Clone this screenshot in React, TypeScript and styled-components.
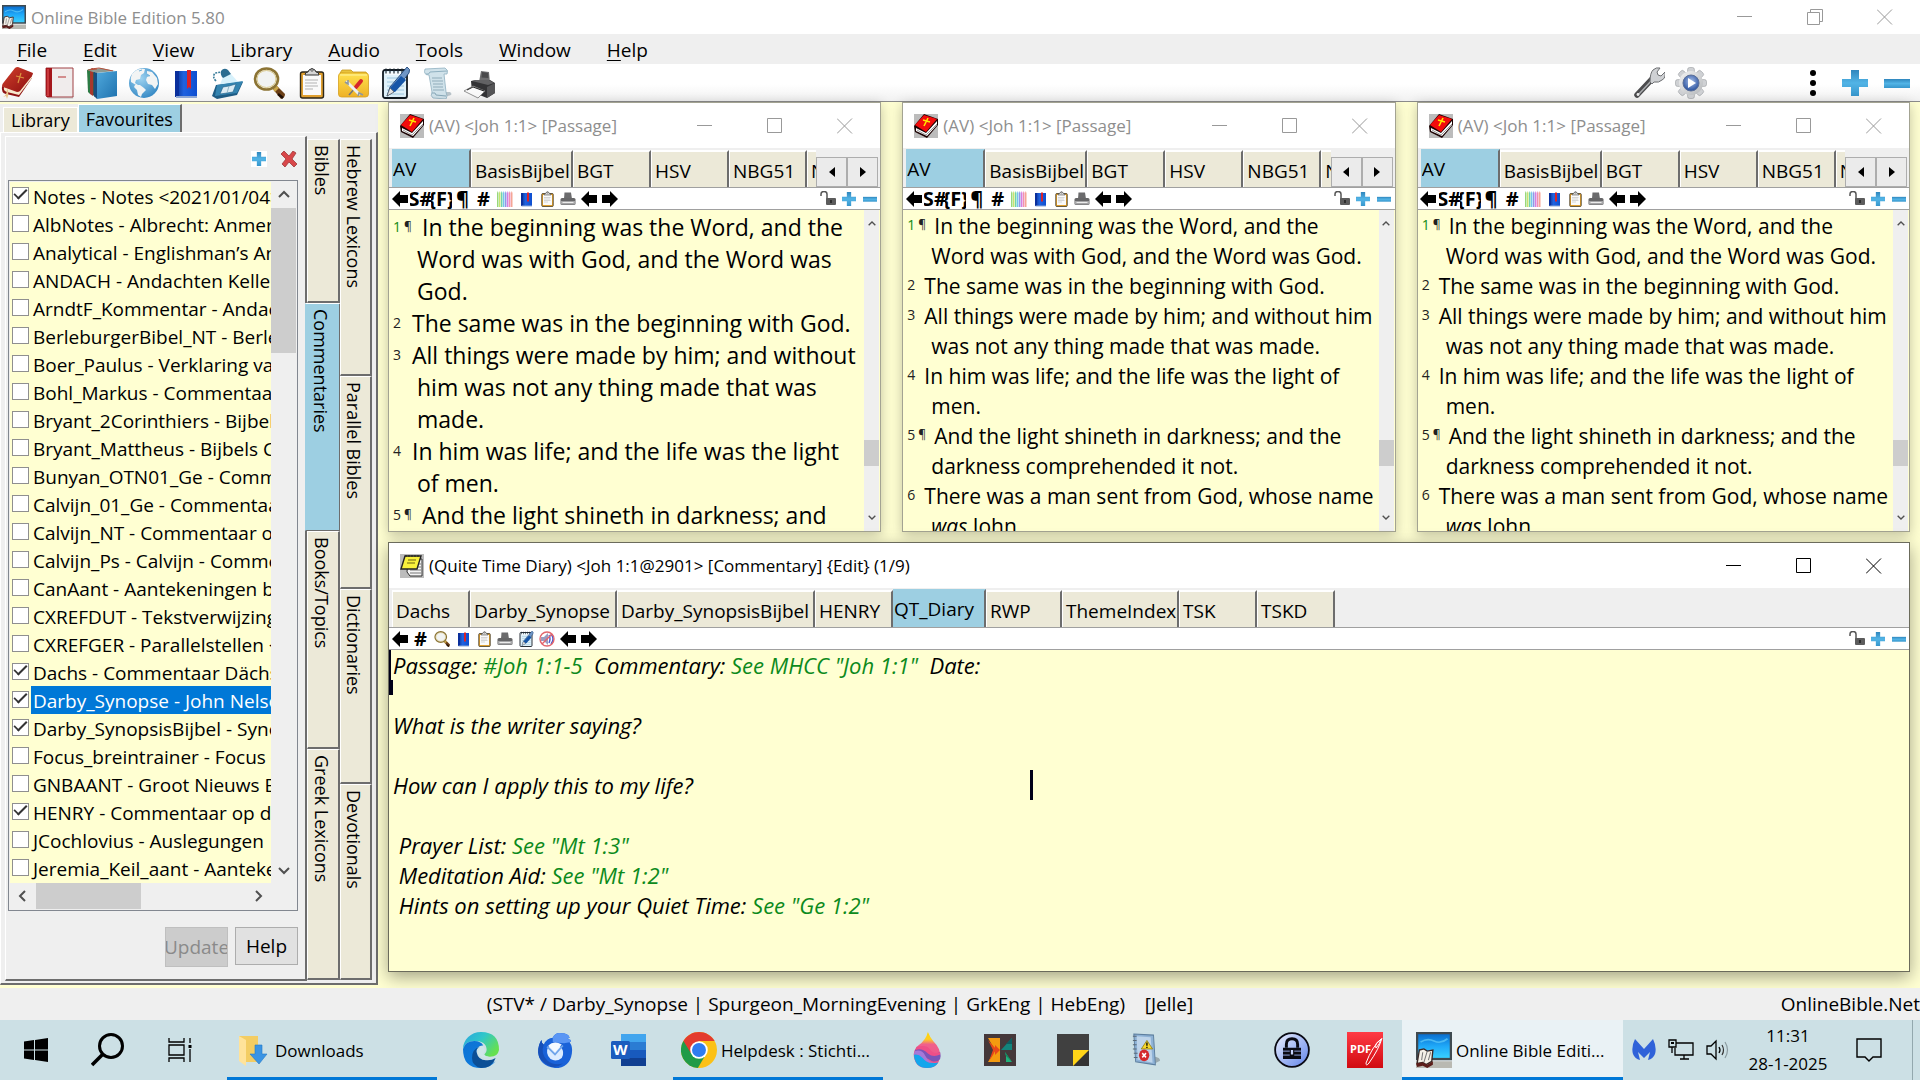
import React from "react";
import styled, { createGlobalStyle, css } from "styled-components";

const UI = `"Open Sans", "Noto Sans", sans-serif`;
const c = {
  paper: "#ffffd2",
  face: "#efefef",
  tab: "#ece9d8",
  active: "#9dcfe2",
  line: "#a0a0a0",
  dark: "#6d6d6d",
  accent: "#0078d7",
  bar: "#cce0e5",
};

const Global = createGlobalStyle`
  *, *::before, *::after { box-sizing: border-box; }
  html, body, #root { margin: 0; height: 100%; }
  body { font-family: ${UI}; font-size: 19px; color: #000; background: ${c.paper}; overflow: hidden; }
  button { font: inherit; color: inherit; background: none; border: 0; padding: 0; margin: 0; }
  svg { display: block; flex: none; }
`;

const Shell = styled.div`
  display: flex;
  flex-direction: column;
  height: 100vh;
`;

/* ---------- icons ---------- */

type I = { s?: number; h?: number };
const Svg = ({ s = 32, h, vb = "0 0 32 32", children }: I & { vb?: string; children: React.ReactNode }) => (
  <svg width={s} height={h ?? s} viewBox={vb} preserveAspectRatio="none" aria-hidden="true">
    {children}
  </svg>
);

const HiddenSvg = styled.svg`
  position: absolute;
`;
const Defs = () => (
  <HiddenSvg width="0" height="0" aria-hidden="true">
    <defs>
      <linearGradient id="red" x1="0" y1="0" x2="1" y2="1"><stop offset="0" stopColor="#d2402c" /><stop offset="1" stopColor="#8c0f10" /></linearGradient>
      <linearGradient id="blue" x1="0" y1="0" x2="1" y2="1"><stop offset="0" stopColor="#4fa8dc" /><stop offset="1" stopColor="#1f72ae" /></linearGradient>
      <linearGradient id="navy" x1="0" y1="0" x2="1" y2="0"><stop offset="0" stopColor="#0a2f8c" /><stop offset=".4" stopColor="#1f62e0" /><stop offset="1" stopColor="#0d4ed0" /></linearGradient>
      <linearGradient id="sky" x1="0" y1="0" x2="0" y2="1"><stop offset="0" stopColor="#0a6fd0" /><stop offset=".5" stopColor="#1fa8f8" /><stop offset="1" stopColor="#38d0ff" /></linearGradient>
      <radialGradient id="globe" cx=".4" cy=".35" r=".7"><stop offset="0" stopColor="#9cd2f0" /><stop offset="1" stopColor="#3488c4" /></radialGradient>
      <linearGradient id="yel" x1="0" y1="0" x2="0" y2="1"><stop offset="0" stopColor="#ffe24f" /><stop offset="1" stopColor="#eeb126" /></linearGradient>
      <linearGradient id="plus" x1="0" y1="0" x2="0" y2="1"><stop offset="0" stopColor="#2f86bd" /><stop offset=".5" stopColor="#52b4e6" /><stop offset="1" stopColor="#3796cc" /></linearGradient>
      <linearGradient id="metal" x1="0" y1="0" x2="1" y2="1"><stop offset="0" stopColor="#f4f4f4" /><stop offset="1" stopColor="#b4b7ba" /></linearGradient>
      <radialGradient id="gearb" cx=".5" cy=".4" r=".6"><stop offset="0" stopColor="#a9c0ea" /><stop offset="1" stopColor="#274f9c" /></radialGradient>
      <linearGradient id="edge1" x1="0" y1="0" x2="1" y2=".6"><stop offset="0" stopColor="#2aa5e0" /><stop offset=".5" stopColor="#30c7c9" /><stop offset="1" stopColor="#66e04f" /></linearGradient>
      <linearGradient id="edge2" x1="0" y1="0" x2="1" y2="1"><stop offset="0" stopColor="#0c72d4" /><stop offset="1" stopColor="#1280e0" /></linearGradient>
      <linearGradient id="drop" x1="0" y1="0" x2="0" y2="1"><stop offset="0" stopColor="#ffd400" /><stop offset=".2" stopColor="#ffcf20" /><stop offset=".34" stopColor="#f0608c" /><stop offset="1" stopColor="#e8508c" /></linearGradient>
      <linearGradient id="lock" x1="0" y1="0" x2="1" y2="1"><stop offset="0" stopColor="#eef2ff" /><stop offset="1" stopColor="#5f83ea" /></linearGradient>
      <linearGradient id="pdf" x1="0" y1="0" x2="0" y2="1"><stop offset="0" stopColor="#ff3a44" /><stop offset="1" stopColor="#d00a10" /></linearGradient>
    </defs>
  </HiddenSvg>
);

const AppIcon = ({ s, h }: I) => (
  <Svg s={s} h={h}>
    <path d="M0 26h32v6H0z" fill="#b9b9b2" />
    <path d="M0 0h32v25H0z" fill="#3f4a50" />
    <path d="M2 2h28v21H2z" fill="url(#sky)" />
    <path d="M4 9q6-4 12-1t12-2" stroke="#64cdfa" strokeWidth="1.5" fill="none" opacity=".7" />
    <path d="M3 16l4-1 3 2 5-1-1 10-5 3-3-2-5 1z" fill="#f4f1e8" stroke="#3a2826" strokeWidth="1.2" />
    <path d="M10 17l-3 10M6 18l-1 7M13 18l-2 7" stroke="#777" strokeWidth=".9" fill="none" />
    <path d="M0 28l6-1 4 2 5-3v3l-5 3-4-2-5 1z" fill="#5c1d1a" />
  </Svg>
);
const BibleRed = () => (
  <Svg>
    <path d="M1 19q-1 7 4 8l13 3 13-19V8L18 25z" fill="#8f1212" />
    <path d="M3 20q-1 4 3 5l12 3L31 11V9L18 24z" fill="#f7e8cc" />
    <path d="M1 19Q1 17 3 15L14 1q1-1 3-1l15 6q0 2-2 4L19 24q-1 1-3 1L5 21q-3-1-4-2z" fill="url(#red)" />
    <path d="M20 6l-3 10M15 9l8 2" stroke="#dc9440" strokeWidth="1.2" />
    <path d="M6 22q0 6-4 8l3-1 1 3q2-4 1-9z" fill="#e9c48c" />
  </Svg>
);
const BookWhite = () => (
  <Svg>
    <path d="M4 29h27l-1 3H5z" fill="#d8d8d8" />
    <path d="M3 1h27v29H4l-1-1z" fill="#f0ecec" stroke="#a04044" strokeWidth="1" />
    <path d="M3 1h6v29H4l-1-2z" fill="#a5161b" />
    <path d="M4 2h2v27H4z" fill="#c8393c" />
    <path d="M15 10h8" stroke="#c0504f" strokeWidth="1.2" />
  </Svg>
);
const Books = () => (
  <Svg>
    <path d="M2 3l3-1v25l-2-2z" fill="#2c7a44" />
    <path d="M5 2l3-1v28l-3-2z" fill="#a8382c" />
    <path d="M8 2l2-1v29l-2-2z" fill="#3c5450" />
    <path d="M2 3l14-2 14 3-19 2z" fill="#8c9a94" />
    <path d="M6 2l8-1 14 3M3 3l9-1" stroke="#b8523c" strokeWidth="1" fill="none" />
    <path d="M9 5l3 1v26l-3-3z" fill="#174f80" />
    <path d="M12 6l20-2v25l-20 3z" fill="url(#blue)" />
  </Svg>
);
const Globe = () => (
  <Svg>
    <circle cx="17" cy="16" r="15" fill="url(#globe)" />
    <path d="M5 7q5-6 13-5l-1 4-3 2-1 4-4 1-1 3 3 2-2 0-5-3Q3 11 5 7z" fill="#f2f4f4" />
    <path d="M8 18l5 0 4 3 2 2-4 4-1 3-3-2-1-5-3-3z" fill="#f2f4f4" />
    <path d="M20 4l5 1 5 6 1 6-3 5-3-4-4-1-2-4 1-3 3-1-3-2z" fill="#f2f4f4" />
    <path d="M12 4l3-1M20 7l3 2" stroke="#6ab0dc" />
  </Svg>
);
const BookBlue = ({ s, h }: I) => (
  <Svg s={s} h={h}>
    <path d="M6 4h22v26H6z" fill="url(#navy)" />
    <path d="M6 4h4v26H6z" fill="#0a2f9c" />
    <path d="M7 29h21v2H7z" fill="#8fa8d4" />
    <path d="M18 3h4v19l-2-2-2 2z" fill="#d8222a" />
  </Svg>
);
const Lamp = () => (
  <Svg>
    <path d="M12 10l8-3 8 9-20 4z" fill="#cdeefa" opacity=".8" />
    <path d="M5 18l27-3-6 13-20 4-5-3z" fill="#1f5c84" />
    <path d="M6 18l26-4-6 12-22 3z" fill="#3484b0" />
    <path d="M12 20l6-1 7-2-3 8-6 1-7 1z" fill="#dcecf4" stroke="#1f5c84" strokeWidth=".6" />
    <path d="M18 19l-2 7" stroke="#7fa8bc" strokeWidth=".8" />
    <path d="M5 14Q1 10 4 6l7-1" stroke="#3d7f9c" strokeWidth="1.600" fill="none" strokeDasharray="2 1" />
    <path d="M10 4q3-4 7-1l3 4-8 4q-3-3-2-7z" fill="#2a6c90" />
  </Svg>
);
const Magnifier = ({ s, h }: I) => (
  <Svg s={s} h={h}>
    <path d="M19 21l4-3 9 9q0 4-4 5z" fill="#6b3f16" />
    <path d="M19 21l4-3 3 3-4 4z" fill="#caa64a" />
    <path d="M25 27l5 4" stroke="#1f0e05" strokeWidth="2.500" />
    <ellipse cx="13.500" cy="12" rx="11.500" ry="10.500" fill="#f1f3f2" stroke="#8c7434" strokeWidth="2.600" />
    <ellipse cx="13.500" cy="12" rx="9.500" ry="8.500" fill="none" stroke="#d9c98c" strokeWidth="1" />
  </Svg>
);
const Clipboard = ({ s, h }: I) => (
  <Svg s={s} h={h}>
    <rect x="5.500" y="5" width="23" height="26" rx="2" fill="#e0a030" stroke="#2c2618" strokeWidth="1.400" />
    <rect x="8" y="8" width="18" height="20" fill="#fafafa" />
    <path d="M10 8q0-3 3-3l1-2q3-3 6 0l1 2q3 0 3 3z" fill="#d6d6d6" stroke="#333" strokeWidth="1" />
    <circle cx="17" cy="3" r="1.200" fill="#fff" stroke="#333" strokeWidth=".8" />
    <path d="M10 13h13M10 16h12M10 19h13M10 22h8" stroke="#b2b2b2" strokeWidth="1" />
  </Svg>
);
const ToolFolder = () => (
  <Svg>
    <path d="M3 6l2-3h9l2 2h13l2 3z" fill="#e8c43c" stroke="#c8981c" strokeWidth=".8" />
    <rect x="1.500" y="6" width="30" height="24" rx="3" fill="url(#yel)" stroke="#d6a020" strokeWidth=".8" />
    <path d="M3 8h27" stroke="#fff2a0" />
    <path d="M24 14l-5 6" stroke="#d6262a" strokeWidth="4" strokeLinecap="round" />
    <path d="M18 21l-6 7" stroke="#777" strokeWidth="1.600" />
    <path d="M10 15l12 12" stroke="#eceff1" strokeWidth="3" strokeLinecap="round" />
    <path d="M8 15l3 2 0-4M21 29l1-3 4 2" stroke="#8f979b" strokeWidth="1.600" fill="none" />
  </Svg>
);
const NotePen = ({ s, h }: I) => (
  <Svg s={s} h={h}>
    <rect x="4" y="3" width="24" height="28" rx="2" fill="#dff1fa" stroke="#121a22" strokeWidth="1.800" />
    <path d="M8 11h17M8 15h17M8 19h17M8 23h17M8 27h17" stroke="#9cc6de" strokeWidth="1" />
    <path d="M6 5h21v3H6z" fill="#f4fafd" />
    <path d="M7 1.500v5M11 1.500v5M15 1.500v5M19 1.500v5M23 1.500v5" stroke="#1c2832" strokeWidth="1.200" />
    <path d="M28 0q4 2 2 6L16 24l-8 5 3-9z" fill="#6f96c6" stroke="#123a70" strokeWidth=".8" />
    <path d="M22 9l5 4-11 12-5-4z" fill="#1656a8" />
    <path d="M11 21l4 4-7 4z" fill="#e6e6e6" stroke="#444" strokeWidth=".5" />
  </Svg>
);
const Scroll = () => (
  <Svg>
    <path d="M16 25h13q4 3-3 4z" fill="#b9c4ca" />
    <path d="M4 2l20-1q4 2 2 6h-3l2 18 1 4-1 3-13-1q-3-2-1-6L8 8Q2 8 4 2z" fill="#d0e2ea" stroke="#8fb0c0" strokeWidth=".8" />
    <path d="M5 7q3 1 4-2l17-1" stroke="#8fb0c0" fill="none" />
    <path d="M11 11h10M11 14h11M12 17h10M12 20h10M12 23h11" stroke="#8fabb9" strokeWidth="1.200" />
    <path d="M11 26q4-1 4 2l10 1" stroke="#88a8b8" fill="none" />
  </Svg>
);
const PrinterBig = () => (
  <Svg>
    <path d="M18 4l8 1 1 11-11-1z" fill="#6e6e70" />
    <path d="M19 5l6 1 .5 5-7-.5z" fill="#4a4a4c" />
    <path d="M8 14l5-1h14l5 3v10l-8 5-15-6z" fill="#333335" />
    <path d="M9 14l16 4 6-2-5-3H13z" fill="#626264" />
    <path d="M24 20l8-4v10l-8 5z" fill="#555557" />
    <path d="M1 24l9-5 12 5-7 7z" fill="#fafafa" stroke="#777" strokeWidth=".8" />
    <path d="M4 23l6-3M10 20l11 4" stroke="#222" />
  </Svg>
);
const PrinterSmall = ({ s, h }: I) => (
  <Svg s={s} h={h}>
    <path d="M9 3h13l2 13H8z" fill="#6b6b6d" />
    <rect x="1" y="14" width="30" height="14" rx="3" fill="#666668" />
    <path d="M2 20h28v7H2z" fill="#a5a5a7" />
    <path d="M5 22h22v2H5z" fill="#ececec" />
  </Svg>
);
const Wrench = () => (
  <Svg>
    <path d="M4 28L19 12" stroke="#4c4c4e" strokeWidth="5.500" strokeLinecap="round" />
    <path d="M5 28L20 12" stroke="#a9abae" strokeWidth="1.600" strokeLinecap="round" />
    <path d="M17 15q0-9 3-12 3-3 7-2l-3 4 1 3 3 1 4-4q1 6-3 8-3 3-8 2l-2 2z" fill="#cfd1d4" stroke="#6e7073" strokeWidth="1" />
    <circle cx="5" cy="27.500" r="1.400" fill="#eee" />
  </Svg>
);
const Gear = () => (
  <Svg>
    <g fill="#cfd1d4" stroke="#9a9da1" strokeWidth=".6">
      {[0, 45, 90, 135].map((a) => (
        <rect key={a} x="12.600" y=".5" width="6.800" height="31" rx="2" transform={`rotate(${a} 16 16)`} />
      ))}
    </g>
    <circle cx="16" cy="16" r="12" fill="url(#metal)" />
    <circle cx="16" cy="16" r="8" fill="url(#gearb)" stroke="#5b6f98" />
    <path d="M13 11l8 5-8 5z" fill="#fff" />
  </Svg>
);
const Plus = ({ s = 26 }: I) => (
  <Svg s={s} vb="0 0 26 26"><path d="M9 0h8v9h9v8h-9v9H9v-9H0V9h9z" fill="url(#plus)" /></Svg>
);
const Minus = ({ s = 26 }: I) => (
  <Svg s={s} vb="0 0 26 26"><path d="M0 9h26v9H0z" fill="url(#plus)" /></Svg>
);
const Dots = () => (
  <Svg><circle cx="16" cy="6" r="3" /><circle cx="16" cy="16" r="3" /><circle cx="16" cy="26" r="3" /></Svg>
);
const RedX = () => (
  <Svg s={16} vb="0 0 16 16">
    <path d="M3 0l5 5 4-5 3 2-4 6 5 5-3 3-5-5-4 5-3-3 4-5-5-5z" fill="#d8474a" stroke="#9c3a3a" strokeWidth=".8" />
  </Svg>
);
const WinBible = () => (
  <Svg s={24} vb="0 0 24 24">
    <path d="M0 0h24v24H0z" fill="#bcbcbc" />
    <path d="M0 12L10 0l14 5v6L13 24 1 18z" fill="#1c0303" />
    <path d="M2 14l10 5L23 7v4L13 22 2 17z" fill="#fff" />
    <path d="M3 16l9 5L23 10" stroke="#9a9a9a" fill="none" />
    <path d="M1 11L10 1l13 4-11 13z" fill="#f20c0c" />
    <path d="M14 4l-4 8M9 6l7 2" stroke="#ffe600" strokeWidth="1.600" />
  </Svg>
);
const WinNote = () => (
  <Svg s={24} vb="0 0 24 24">
    <path d="M0 0h24v24H0z" fill="#bcbcbc" />
    <path d="M8 5h14v17H10l-3-4z" fill="#f4f4f4" stroke="#333" />
    <path d="M10 19h11M19 10h2M18 13h3M10 16h11" stroke="#777" />
    <path d="M5 2h16l-4 13H1z" fill="#f8f03c" stroke="#222" strokeWidth="1.400" />
    <path d="M8 6h8M7 9h8" stroke="#6b6010" />
    <path d="M6 1v2M9 1v2M12 1v2M15 1v2M18 1v2" stroke="#222" />
  </Svg>
);
const Arrow = ({ flip }: { flip?: boolean }) => (
  <Svg s={16} vb="0 0 16 16">
    <path d={flip ? "M16 8L8 0v4H0v8h8v4z" : "M0 8l8-8v4h8v8H8v4z"} />
  </Svg>
);
const Pencils = () => (
  <Svg s={16} vb="0 0 16 16">
    {["#7fcf5a", "#b8dc4e", "#4cc79c", "#58b4ea", "#7c7be0", "#d060d8", "#ee769c", "#f2907c"].map((k, i) => (
      <path key={k} d={`M${i * 2 + 0.2} 2l.6-2 .6 2v14h-1.200z`} fill={k} />
    ))}
  </Svg>
);
const Unlock = () => (
  <Svg s={16} vb="0 0 16 16">
    <path d="M1 5V3q0-2.500 3-2.500t3 2.500v5" fill="none" stroke="#555" strokeWidth="1.500" />
    <rect x="6" y="7" width="10" height="7" rx="1" fill="#5c5c5c" />
    <path d="M11 9v3" stroke="#222" strokeWidth="1.600" />
  </Svg>
);
const NoSound = () => (
  <Svg s={16} vb="0 0 16 16">
    <path d="M2 6h3l4-4v12l-4-4H2z" fill="#9a9cc0" />
    <path d="M10 4q2 4 0 8M12 3q4 5 0 10" stroke="#4658d0" strokeWidth="1.400" fill="none" />
    <circle cx="8" cy="8" r="7" fill="none" stroke="#e2656c" strokeWidth="1.400" />
    <path d="M3 13L13 3" stroke="#e2656c" strokeWidth="1.400" />
  </Svg>
);

/* taskbar icons */
const Start = () => (
  <Svg s={24} vb="0 0 24 24"><path d="M0 3.500l10-1.400v9.400H0zM11 2l13-2v11.500H11zM0 12.500h10v9.400L0 20.500zM11 12.500h13V24l-13-2z" /></Svg>
);
const Search = () => (
  <Svg s={34} vb="0 0 34 34"><circle cx="20" cy="13" r="11.500" fill="none" stroke="#000" strokeWidth="3" /><path d="M12 21L1 32" stroke="#000" strokeWidth="3.500" /></Svg>
);
const TaskView = () => (
  <Svg s={24} vb="0 0 24 24">
    <path d="M1 0v4h15V0M1 24v-4h15v4M1 7h15v10H1zM22 0v5M22 11v13" fill="none" stroke="#000" strokeWidth="1.300" />
    <path d="M20.500 7h3v3h-3z" />
  </Svg>
);
const Folder = () => (
  <Svg s={36} h={32} vb="-3 0 36 32">
    <path d="M1 2h19v26H5z" fill="#f3cd63" />
    <path d="M1 2l7 4v26l-7-5z" fill="#ffe39a" />
    <path d="M17 11h7v9h5l-8 10-9-10h5z" fill="#3a94e4" stroke="#2478c6" strokeWidth=".6" />
  </Svg>
);
const Edge = () => (
  <Svg s={36}>
    <path d="M16 0C7 0 0 7 0 15q2-7 10-7 11 0 11 8 0 2-2 4 1 2 5 2 7 0 8-6Q32 0 16 0z" fill="url(#edge1)" />
    <path d="M0 15q2-7 10-7 6 0 8 4-7 0-6 8 1 7 9 9 4 0 8-3-5 6-13 6Q0 32 0 15z" fill="url(#edge2)" />
    <path d="M12 18q2 8 10 7 4 0 7-2-3 9-13 9-8-2-8-9 0-8 7-10-4 2-3 5z" fill="#0b4f96" />
    <path d="M17 12q-5 3-3 8 3 4 9 2-5-1-5-3 3-3-1-7z" fill="#cfe6ea" />
  </Svg>
);
const Bird = () => (
  <Svg s={36}>
    <path d="M16 32Q2 30 1 18q0-7 3-11 0 3 2 4 3-6 8-6 2-5 8-4 6 0 7 4l-2 1 3 1q1 1-1 2 3 4 2 10-2 13-15 13z" fill="#1a62d8" />
    <path d="M14 5q2-5 8-4 6 0 7 4l-2 1 3 1q1 1-1 2l-5 1-10-1z" fill="#5a96f4" />
    <path d="M4 7q0 3 2 4-3 8 3 14 5 5 14 3-5 4-10 3Q1 26 1 18q0-7 3-11z" fill="#1750b8" />
    <path d="M10 13q6-4 11 0 4 5 1 10-5 4-10 1-5-5-2-11z" fill="#dcecff" />
    <path d="M9 13l7 7 7-8" fill="none" stroke="#6fa4ea" strokeWidth="1.600" />
    <path d="M10 12q5-5 12-1l-6 7z" fill="#f6faff" />
  </Svg>
);
const IconText = styled.text`
  font: bold 15px ${UI};
  fill: #fff;
`;
const Word = () => (
  <Svg s={36} vb="0 0 36 36">
    <path d="M10 2h25v8H10z" fill="#41a5ee" /><path d="M10 10h25v8H10z" fill="#2b7cd3" />
    <path d="M10 18h25v8H10z" fill="#185abd" /><path d="M10 26h25v8H10z" fill="#103f91" />
    <rect x="0" y="9" width="19" height="18" rx="1.500" fill="#1b5cbe" />
    <IconText x="2" y="23">W</IconText>
  </Svg>
);
const Chrome = () => (
  <Svg s={36}>
    <circle cx="16" cy="16" r="16" fill="#fbc116" />
    <path d="M16 16L2.100 8A16 16 0 0 0 15 32l7-12z" fill="#209b48" />
    <path d="M16 8h13.900a16 16 0 0 0-27.700 0L9 19z" fill="#e33b2e" />
    <circle cx="16" cy="16" r="7.800" fill="#fff" /><circle cx="16" cy="16" r="6.200" fill="#2f7cf0" />
  </Svg>
);
const Drop = () => (
  <Svg s={28} h={36}>
    <path d="M17 0q2 4 6 8 9 7 8 14-2 10-15 10T1 22q-1-6 5-10 9-5 11-12z" fill="url(#drop)" />
    <path d="M4 14q11-1 14 3t13 1q1 3 0 6-3 3-9 2-9-4-20-9z" fill="#7a55b8" />
    <path d="M4 13q12-2 15 2 4 5 12 3v2q-8 3-14-1-7-5-14-3z" fill="#ee4f88" />
    <path d="M1 20q8-1 12 4t16 3q-4 5-13 5-14 0-15-12z" fill="#12a6ec" />
    <path d="M2 17q8-2 12 4t10 6q-8 1-13-4-5-4-10-3z" fill="#a678d8" />
  </Svg>
);
const KIcon = () => (
  <Svg s={32}>
    <path d="M0 0h32v32H0z" fill="#44383a" />
    <path d="M4 4h12v24H4l7-12z" fill="#f49a10" /><path d="M4 6l8 9-3 6-4 6 4-11z" fill="#e8461a" /><path d="M11 11l5 5-5 5z" fill="#e8461a" />
    <path d="M28 4L17 16h11z" fill="#12847c" /><path d="M22 10h6V4z" fill="#0b5e62" /><path d="M21 18l7 10h-6v-6z" fill="#22b07a" /><path d="M22 22l-1-4 7 10z" fill="#128a60" />
  </Svg>
);
const Sticky = () => (
  <Svg s={32}><path d="M0 0h32v32H0z" fill="#404040" /><path d="M32 16v16H16z" fill="#333" /><path d="M16 16h16L16 32z" fill="#ffd518" /></Svg>
);
const Notebook = () => (
  <Svg s={30} h={34}>
    <path d="M22 30l9-4q0-3-6-4z" fill="#9aa9ae" />
    <path d="M3 1l21 1 2 28-21-3z" fill="#8eb2d6" stroke="#5d7f9f" />
    <path d="M6 3l15 1 2 24-16-3z" fill="#bdd4ea" />
    <path d="M2 3h4M2 7h4M2 11h4M2 15h4M3 19h4M3 23h4" stroke="#5a6a78" />
    <path d="M17 7l6 8H11z" fill="#f8d92a" stroke="#8c7710" strokeWidth=".8" /><path d="M17 9v3M17 13v1" stroke="#000" strokeWidth="1.400" />
    <circle cx="14" cy="21" r="5.500" fill="#d42a2e" /><path d="M12 19l4 4M16 19l-4 4" stroke="#fff" strokeWidth="1.600" />
  </Svg>
);
const Lock = () => (
  <Svg s={36}>
    <circle cx="16" cy="16" r="15" fill="url(#lock)" stroke="#0a0a14" strokeWidth="1.600" />
    <path d="M11 14v-3q0-5 5-5t5 5v3" fill="none" stroke="#0a0a14" strokeWidth="2.600" />
    <path d="M8 14h16v10H8z" fill="#0a0a14" />
    <path d="M8 17h6M18 17h6M8 20.500h6M18 20.500h6" stroke="#9fb4f4" strokeWidth=".8" />
    <path d="M16 16v4" stroke="#c8d4ff" strokeWidth="2" />
  </Svg>
);
const PdfText = styled.text`
  font: bold 11px ${UI};
  fill: #fff;
`;
const Pdf = () => (
  <Svg s={36} vb="0 0 36 36">
    <path d="M0 0h36v36H0z" fill="url(#pdf)" />
    <path d="M35 7q-8 4-6 9 4-4 5-9-9 8-15 24 0 4 3 0Q32 17 35 6" fill="none" stroke="#fff" strokeWidth="1" />
    <PdfText x="3" y="21">PDF</PdfText>
  </Svg>
);
const Malware = () => (
  <Svg s={24} vb="0 0 24 24"><path d="M3 1l9 10 9-10q4 8 2 15-2 5-7 6l2-8-6 6-6-6 2 8q-5-1-7-6Q-1 9 3 1z" fill="#2f62d9" /></Svg>
);
const Net = () => (
  <Svg s={26} h={22} vb="0 0 26 22"><path d="M8 4h17v12H7V9M12 20h9M16 16v4M1 1h7v7H1zM4 8v6" fill="none" stroke="#000" strokeWidth="1.300" /><path d="M3 3h3v2H3z" /></Svg>
);
const Speaker = () => (
  <Svg s={24} vb="0 0 24 24">
    <path d="M1 8h4l5-5v18l-5-5H1zM13 9q2 3 0 6" fill="none" stroke="#000" strokeWidth="1.300" />
    <path d="M16 7q3 5 0 10" fill="none" stroke="#333" strokeWidth="1.200" />
    <path d="M19 4q5 8 0 16" fill="none" stroke="#8b9ba0" strokeWidth="1.200" />
  </Svg>
);
const Notify = () => (
  <Svg s={26} vb="0 0 26 26"><path d="M1 2h24v18h-8l-4 4-4-4H1z" fill="none" stroke="#000" strokeWidth="1.400" /></Svg>
);

/* ---------- window chrome ---------- */

const ControlBtn = styled.button`
  width: 70px;
  height: 100%;
  display: grid;
  place-items: center;
`;
const Controls = ({ color, restore }: { color: string; restore?: boolean }) => (
  <>
    <ControlBtn aria-label="Minimise"><Svg s={16} vb="0 0 16 16"><path d="M0 7.500h15" stroke={color} /></Svg></ControlBtn>
    <ControlBtn aria-label="Maximise">
      <Svg s={16} vb="0 0 16 16">
        <path d={restore ? "M.5 3.500h12v12H.5zM3.500 3V.5h12v12H13" : "M.5.5h14v14H.5z"} fill="none" stroke={color} />
      </Svg>
    </ControlBtn>
    <ControlBtn aria-label="Close"><Svg s={16} vb="0 0 16 16"><path d="M0 .5l15 15M15 .5l-15 15" stroke={color} /></Svg></ControlBtn>
  </>
);

const TitleBar = styled.header`
  display: flex;
  align-items: center;
  height: 34px;
  flex: none;
  padding-left: 2px;
  background: #fff;
`;
const TitleText = styled.span<{ $color?: string }>`
  flex: 1;
  margin-left: 5px;
  font-size: 17px;
  color: ${(p) => p.$color ?? "#8e8e8e"};
`;

const MenuBar = styled.nav`
  display: flex;
  align-items: center;
  flex: none;
  height: 30px;
  gap: 36px;
  padding: 2px 17px 0;
  background: ${c.face};
`;
const MenuItem = styled.button`
  &::first-letter { text-decoration: underline; text-underline-offset: 3px; }
`;

const ToolBar = styled.div`
  display: flex;
  align-items: center;
  flex: none;
  height: 38px;
  padding: 0 2px 0 1px;
  background: linear-gradient(#fff 55%, #f1f1f1);
  border-bottom: 1px solid #8c8c8c;
`;
const ToolBtn = styled.button<{ $mid?: boolean }>`
  width: 42px;
  display: grid;
  justify-content: ${(p) => (p.$mid ? "center" : "start")};
`;
const Spacer = styled.span`
  flex: 1;
`;
const Gap = styled.span`
  width: 80px;
`;

/* ---------- sidebar ---------- */

const Workspace = styled.main`
  flex: 1;
  min-height: 0;
  display: flex;
  background: ${c.paper};
`;
const Side = styled.aside`
  width: 378px;
  flex: none;
  display: flex;
  flex-direction: column;
  margin: 2px 0 3px;
  background: ${c.face};
`;
const SideTabs = styled.div`
  display: flex;
  align-items: flex-end;
  height: 28px;
  padding-left: 3px;
  font-size: 18px;
`;
const SideTab = styled.button<{ $on?: boolean }>`
  height: ${(p) => (p.$on ? 28 : 25)}px;
  padding: 0 7px;
  background: ${(p) => (p.$on ? c.active : c.tab)};
  border: solid #fff;
  border-width: 1px 1px 0;
  ${(p) => p.$on && css`border-right: 2px solid ${c.dark};`}
`;
const SideFrame = styled.div`
  flex: 1;
  min-height: 0;
  display: flex;
  padding: 3px 4px 2px 4px;
  border: 1px solid #fff;
  border-right: 2px solid ${c.dark};
  border-bottom: 2px solid ${c.dark};
`;
const SidePanel = styled.section`
  width: 302px;
  display: flex;
  flex-direction: column;
  padding: 0 7px 14px 2px;
  border: 1px solid #fff;
  border-right: 2px solid ${c.dark};
  border-bottom: 2px solid ${c.dark};
`;
const SideTools = styled.div`
  display: flex;
  justify-content: flex-end;
  align-items: center;
  gap: 14px;
  height: 43px;
  padding-right: 1px;
`;
const PlusTile = styled.button`
  width: 16px;
  height: 16px;
  display: grid;
  place-items: center;
  background: #fff;
`;
const ListBox = styled.div`
  flex: 1;
  min-height: 0;
  display: grid;
  grid-template: minmax(0, 1fr) 26px / minmax(0, 1fr) 25px;
  border: 1px solid #828790;
  padding: 1px;
  background: ${c.face};
`;
const Rows = styled.div`
  overflow: hidden;
  background: ${c.paper};
`;
const Row = styled.label<{ $on?: boolean }>`
  display: flex;
  align-items: center;
  height: 28px;
  padding-left: 2px;
  white-space: nowrap;
  span {
    flex: 1;
    height: 28px;
    margin-left: 2px;
    padding-left: 2px;
    line-height: 30px;
    background: ${(p) => (p.$on ? c.accent : "none")};
    color: ${(p) => (p.$on ? "#fff" : "#000")};
  }
`;
const Check = styled.input`
  appearance: none;
  flex: none;
  width: 17px;
  height: 17px;
  margin: 0 0 2px;
  border: 1px solid #8f8f8f;
  background: #fff;
  &:checked::after {
    content: "";
    display: block;
    width: 15px;
    height: 7px;
    margin-top: 1px;
    border: solid #333;
    border-width: 0 0 2px 2px;
    transform: rotate(-45deg) scaleX(0.85);
  }
`;
const VBar = styled.div<{ $before: number; $thumb: number; $after: number }>`
  display: grid;
  grid-template-rows: ${(p) => `${p.$before}fr ${p.$thumb}fr ${p.$after}fr`};
  background: ${c.face};
  svg { justify-self: center; }
  svg:last-child { align-self: end; }
`;
const HBar = styled.div`
  display: grid;
  grid-template-columns: 26px 105px 1fr 26px;
  align-items: center;
  justify-items: center;
  background: ${c.face};
  > :nth-child(2) { align-self: stretch; justify-self: stretch; }
  svg:last-child { grid-column: 4; }
`;
const Thumb = styled.div`
  background: #cdcdcd;
`;
const Chev = ({ d, s = 12, pad = 7 }: { d: "u" | "d" | "l" | "r"; s?: number; pad?: number }) => {
  const path = { u: "M1 8l5-5 5 5", d: "M1 4l5 5 5-5", l: "M8 1L3 6l5 5", r: "M4 1l5 5-5 5" }[d];
  const vertical = d === "u" || d === "d";
  return (
    <Svg s={s} h={vertical ? s + pad * 2 : s} vb={vertical ? `0 ${(-pad * 12) / s} 12 ${12 + (pad * 24) / s}` : "0 0 12 12"}>
      <path d={path} fill="none" stroke="#505050" strokeWidth="2" />
    </Svg>
  );
};
const SideButtons = styled.div`
  display: flex;
  justify-content: flex-end;
  gap: 7px;
  margin-top: 16px;
`;
const PushBtn = styled.button`
  width: 63px;
  height: 38px;
  overflow: hidden;
  border: 1px solid #adadad;
  background: #e1e1e1;
  &:disabled {
    display: flex;
    justify-content: center;
    align-items: center;
    height: 40px;
    margin-bottom: -2px;
    border-color: #bfbfbf;
    background: #ccc;
    color: #8a8a8a;
  }
`;
const VTabs = styled.div`
  flex: 1;
  display: flex;
  flex-direction: column;
  padding: 3px 0 1px;
`;
const VTab = styled.button<{ $size: number; $on?: boolean }>`
  flex: ${(p) => p.$size - 9} 1 0;
  min-height: 0;
  writing-mode: vertical-rl;
  text-align: left;
  padding: 5px 2px 0 0;
  font-size: 18px;
  line-height: 24px;
  background: ${(p) => (p.$on ? c.active : c.tab)};
  border: 1px solid #fff;
  border-right: 2px solid ${c.dark};
  border-bottom: 2px solid ${c.dark};
  ${(p) => p.$on && css`margin: 0 -1px 0 -2px; border-left-color: ${c.active}; border-bottom-width: 1px;`}
`;

/* ---------- document windows ---------- */

const Desk = styled.div`
  flex: 1;
  min-width: 0;
  display: grid;
  grid-template: minmax(0, 1fr) minmax(0, 1fr) / repeat(3, minmax(0, 1fr));
  gap: 10px 21px;
  padding: 0 10px 16px;
`;
const Win = styled.section<{ $active?: boolean }>`
  display: flex;
  flex-direction: column;
  min-width: 0;
  border: 1px solid ${(p) => (p.$active ? "#6b6b5c" : "#a3a392")};
  background: #fff;
  box-shadow: ${(p) => (p.$active ? "0 5px 16px rgba(0,0,0,.36)" : "0 3px 12px rgba(0,0,0,.24)")};
  ${(p) => p.$active && css`grid-column: 1 / -1;`}
`;
const WinTitle = styled.header`
  display: flex;
  align-items: center;
  height: 45px;
  flex: none;
  padding-left: 11px;
`;
const WinTabs = styled.div`
  display: flex;
  align-items: flex-end;
  height: 39px;
  flex: none;
  padding: 0 2px 0 3px;
  background: ${c.face};
  overflow: hidden;
`;
const TabStrip = styled.div`
  flex: 1;
  min-width: 0;
  height: 100%;
  display: flex;
  align-items: flex-end;
  overflow: hidden;
`;
const WinTab = styled.button<{ $w: number; $on?: boolean }>`
  width: ${(p) => p.$w}px;
  height: ${(p) => (p.$on ? 38 : 37)}px;
  flex: none;
  overflow: hidden;
  text-align: left;
  white-space: nowrap;
  line-height: 38px;
  padding-left: ${(p) => (p.$on ? 0 : 3)}px;
  background: ${(p) => (p.$on ? c.active : c.tab)};
  border: solid #fff;
  border-width: 2px 2px 0 1px;
  border-right-color: ${c.dark};
  ${(p) => p.$on && css`border-top-color: ${c.active}; border-left-color: ${c.active}; line-height: 34px;`}
`;
const StepBtn = styled.button`
  width: 31px;
  height: 30px;
  display: grid;
  place-items: center;
  border: 1px solid #adadad;
  background: #ebebeb;
`;
const WinTools = styled.div`
  display: flex;
  align-items: center;
  height: 23px;
  flex: none;
  border: solid ${c.line};
  border-width: 1px 0;
  overflow: hidden;
`;
const Slot = styled.button`
  width: 21px;
  height: 21px;
  flex: none;
  display: flex;
  align-items: center;
  justify-content: center;
  overflow: hidden;
  font-size: 20px;
  font-weight: 700;
  line-height: 22px;
`;
const Body = styled.div`
  flex: 1;
  min-height: 0;
  display: flex;
  background: ${c.paper};
`;
const Page = styled.article<{ $size: number; $lead: number }>`
  flex: 1;
  min-width: 0;
  overflow: hidden;
  padding: 1px 3px 0 4px;
  font-size: ${(p) => p.$size}px;
  line-height: ${(p) => p.$lead}px;
`;
const Verse = styled.p`
  margin: 0;
  padding-left: 24px;
  text-indent: -24px;
`;
const Num = styled.span<{ $green?: boolean; $w: number }>`
  display: inline-block;
  width: ${(p) => p.$w}px;
  text-indent: 0;
  font-size: 14px;
  line-height: 14px;
  vertical-align: 4px;
  white-space: pre;
  color: ${(p) => (p.$green ? "#128a12" : "#222")};
  b { color: #222; font-weight: 400; font-size: 12px; vertical-align: 1px; margin-left: 3px; }
`;
const Rail = styled(VBar)`
  width: 15px;
  margin-right: 1px;
`;

const passageTabs: [string, number][] = [["AV", 79], ["BasisBijbel", 102], ["BGT", 78], ["HSV", 78], ["NBG51", 78], ["NBV", 78]];
const diaryTabs: [string, number][] = [["Dachs", 78], ["Darby_Synopse", 147], ["Darby_SynopsisBijbel", 198], ["HENRY", 78], ["QT_Diary", 93], ["RWP", 76], ["ThemeIndex", 117], ["TSK", 78], ["TSKD", 78]];

const verses: { n: number; mark?: boolean; text: React.ReactNode }[] = [
  { n: 1, mark: true, text: "In the beginning was the Word, and the Word was with God, and the Word was God." },
  { n: 2, text: "The same was in the beginning with God." },
  { n: 3, text: "All things were made by him; and without him was not any thing made that was made." },
  { n: 4, text: "In him was life; and the life was the light of men." },
  { n: 5, mark: true, text: "And the light shineth in darkness; and the darkness comprehended it not." },
  { n: 6, text: <>There was a man sent from God, whose name <i>was</i> John.</> },
];

const RightTools = () => (
  <>
    <Spacer />
    <Slot aria-label="Unlock"><Unlock /></Slot>
    <Slot aria-label="Larger text"><Plus s={14} /></Slot>
    <Slot aria-label="Smaller text"><Minus s={14} /></Slot>
  </>
);

const Passage = ({ size, lead, indent, count }: { size: number; lead: number; indent: number; count: number }) => (
  <Win>
    <WinTitle>
      <WinBible />
      <TitleText>(AV) &lt;Joh 1:1&gt; [Passage]</TitleText>
      <Controls color="#999" />
    </WinTitle>
    <WinTabs>
      <TabStrip role="tablist">
        {passageTabs.map(([t, w], i) => (
          <WinTab key={t} role="tab" aria-selected={i === 0} $w={w} $on={i === 0}>{t}</WinTab>
        ))}
      </TabStrip>
      <StepBtn aria-label="Previous tabs"><Svg s={6} h={10} vb="0 0 6 10"><path d="M6 0v10L0 5z" /></Svg></StepBtn>
      <StepBtn aria-label="Next tabs"><Svg s={6} h={10} vb="0 0 6 10"><path d="M0 0v10l6-5z" /></Svg></StepBtn>
    </WinTabs>
    <WinTools>
      <Slot aria-label="Back"><Arrow /></Slot>
      <Slot>S#</Slot>
      <Slot>{"{F}"}</Slot>
      <Slot>¶</Slot>
      <Slot>#</Slot>
      <Slot aria-label="Highlight"><Pencils /></Slot>
      <Slot aria-label="Bookmark"><BookBlue s={16} /></Slot>
      <Slot aria-label="Copy"><Clipboard s={16} /></Slot>
      <Slot aria-label="Print"><PrinterSmall s={16} /></Slot>
      <Slot aria-label="Previous"><Arrow /></Slot>
      <Slot aria-label="Next"><Arrow flip /></Slot>
      <RightTools />
    </WinTools>
    <Body>
      <Page $size={size} $lead={lead}>
        {verses.slice(0, count).map((v) => (
          <Verse key={v.n}>
            <Num $green={v.n === 1} $w={v.mark ? indent + 10 : indent}>{v.n}{v.mark && <b>¶</b>}</Num>
            {v.text}
          </Verse>
        ))}
      </Page>
      <Rail $before={229} $thumb={26} $after={65}>
        <Chev d="u" s={8} pad={10} />
        <Thumb />
        <Chev d="d" s={8} pad={10} />
      </Rail>
    </Body>
  </Win>
);

const DiaryPage = styled.article`
  position: relative;
  flex: 1;
  padding: 0 4px;
  font-size: 22px;
  font-style: italic;
  line-height: 30px;
  white-space: pre-wrap;
  p { margin: 0; min-height: 30px; }
  a { color: #0c8a1c; text-decoration: none; }
`;
const Caret = styled.span`
  position: absolute;
  left: 0;
  top: 0;
  width: 2px;
  height: 45px;
  background: #000018;
  &::after {
    content: "";
    position: absolute;
    left: 0;
    bottom: 0;
    width: 4px;
    height: 15px;
    background: #000018;
  }
`;
const Beam = styled.span`
  position: absolute;
  left: 641px;
  top: 120px;
  width: 3px;
  height: 30px;
  background: #000018;
`;

const Diary = () => (
  <Win $active>
    <WinTitle>
      <WinNote />
      <TitleText $color="#000">(Quite Time Diary) &lt;Joh 1:1@2901&gt; [Commentary] {"{Edit}"} (1/9)</TitleText>
      <Controls color="#000" />
    </WinTitle>
    <WinTabs role="tablist">
      {diaryTabs.map(([t, w]) => (
        <WinTab key={t} role="tab" aria-selected={t === "QT_Diary"} $w={w} $on={t === "QT_Diary"}>{t}</WinTab>
      ))}
    </WinTabs>
    <WinTools>
      <Slot aria-label="Back"><Arrow /></Slot>
      <Slot>#</Slot>
      <Slot aria-label="Search"><Magnifier s={16} /></Slot>
      <Slot aria-label="Bookmark"><BookBlue s={16} /></Slot>
      <Slot aria-label="Copy"><Clipboard s={16} /></Slot>
      <Slot aria-label="Print"><PrinterSmall s={16} /></Slot>
      <Slot aria-label="Edit"><NotePen s={16} /></Slot>
      <Slot aria-label="Mute"><NoSound /></Slot>
      <Slot aria-label="Previous"><Arrow /></Slot>
      <Slot aria-label="Next"><Arrow flip /></Slot>
      <RightTools />
    </WinTools>
    <Body>
      <DiaryPage>
        <Caret />
        <Beam />
        <p>Passage: <a href="#joh1">#Joh 1:1-5</a>{"  "}Commentary: <a href="#mhcc">See MHCC "Joh 1:1"</a>{"  "}Date:</p>
        <p />
        <p>What is the writer saying?</p>
        <p />
        <p>How can I apply this to my life?</p>
        <p />
        <p> Prayer List: <a href="#mt13">See "Mt 1:3"</a></p>
        <p> Meditation Aid: <a href="#mt12">See "Mt 1:2"</a></p>
        <p> Hints on setting up your Quiet Time: <a href="#ge12">See "Ge 1:2"</a></p>
      </DiaryPage>
    </Body>
  </Win>
);

/* ---------- bottom bars ---------- */

const Status = styled.footer`
  display: grid;
  grid-template-columns: 1fr auto 1fr;
  align-items: center;
  height: 32px;
  flex: none;
  background: ${c.face};
  white-space: pre;
  span:nth-child(2) { grid-column: 2; margin-right: 240px; }
  span:last-child { justify-self: end; }
`;
const TaskBar = styled.nav`
  display: flex;
  align-items: center;
  height: 60px;
  flex: none;
  background: ${c.bar};
  font-size: 17px;
`;
const TaskBtn = styled.button<{ $w?: number }>`
  width: ${(p) => p.$w ?? 73}px;
  height: 60px;
  flex: none;
  display: grid;
  place-items: center;
`;
const TaskApp = styled.button<{ $w: number; $left: number; $on?: boolean }>`
  width: ${(p) => p.$w}px;
  height: 60px;
  flex: none;
  display: flex;
  align-items: center;
  gap: 4px;
  margin: 0 7px 0 ${(p) => p.$left}px;
  padding: 3px 0 0 ${(p) => (p.$on ? 14 : 8)}px;
  white-space: nowrap;
  border-bottom: 3px solid ${c.accent};
  background: ${(p) => (p.$on ? "#eaf2f5" : "none")};
`;
const Tray = styled.div`
  flex: 1;
  display: flex;
  align-items: center;
  justify-content: flex-end;
  gap: 12px;
  height: 60px;
  padding-right: 30px;
`;
const Clock = styled.time`
  width: 92px;
  margin-right: 10px;
  text-align: center;
  line-height: 28px;
  font-size: 17px;
`;
const ShowDesktop = styled.button`
  width: 8px;
  height: 60px;
  border-left: 1px solid #93a8ae;
`;

const books: [string, boolean?][] = [
  ["Notes - Notes <2021/01/04>", true],
  ["AlbNotes - Albrecht: Anmerkungen"],
  ["Analytical - Englishman’s Analytical"],
  ["ANDACH - Andachten Keller"],
  ["ArndtF_Kommentar - Andachten"],
  ["BerleburgerBibel_NT - Berleburger"],
  ["Boer_Paulus - Verklaring van"],
  ["Bohl_Markus - Commentaar"],
  ["Bryant_2Corinthiers - Bijbels"],
  ["Bryant_Mattheus - Bijbels Commentaar"],
  ["Bunyan_OTN01_Ge - Commentary"],
  ["Calvijn_01_Ge - Commentaar"],
  ["Calvijn_NT - Commentaar op"],
  ["Calvijn_Ps - Calvijn - Commentaar"],
  ["CanAant - Aantekeningen bij"],
  ["CXREFDUT - Tekstverwijzingen"],
  ["CXREFGER - Parallelstellen <2014>"],
  ["Dachs - Commentaar Dächsel", true],
  ["Darby_Synopse - John Nelson", true],
  ["Darby_SynopsisBijbel - Synopsis", true],
  ["Focus_breintrainer - Focus - brein"],
  ["GNBAANT - Groot Nieuws Bijbel"],
  ["HENRY - Commentaar op de", true],
  ["JCochlovius - Auslegungen"],
  ["Jeremia_Keil_aant - Aantekeningen"],
];

const leftTools: [string, React.ReactNode][] = [
  ["Bible", <BibleRed />], ["Commentary", <BookWhite />], ["Books", <Books />], ["Web", <Globe />],
  ["Dictionary", <BookBlue />], ["Study", <Lamp />], ["Search", <Magnifier />], ["Clipboard", <Clipboard />],
  ["Tools", <ToolFolder />], ["Notes", <NotePen />], ["Scroll", <Scroll />], ["Print", <PrinterBig />],
];

export default function App() {
  return (
    <Shell>
      <Global />
      <Defs />
      <TitleBar>
        <AppIcon s={24} h={24} />
        <TitleText>Online Bible Edition 5.80</TitleText>
        <Controls color="#999" restore />
      </TitleBar>
      <MenuBar>
        {["File", "Edit", "View", "Library", "Audio", "Tools", "Window", "Help"].map((m) => (
          <MenuItem key={m}>{m}</MenuItem>
        ))}
      </MenuBar>
      <ToolBar>
        {leftTools.map(([name, icon]) => <ToolBtn key={name} aria-label={name}>{icon}</ToolBtn>)}
        <Spacer />
        <ToolBtn $mid aria-label="Settings"><Wrench /></ToolBtn>
        <ToolBtn $mid aria-label="Run"><Gear /></ToolBtn>
        <Gap />
        <ToolBtn $mid aria-label="More"><Dots /></ToolBtn>
        <ToolBtn $mid aria-label="Zoom in"><Plus /></ToolBtn>
        <ToolBtn $mid aria-label="Zoom out"><Minus /></ToolBtn>
      </ToolBar>
      <Workspace>
        <Side>
          <SideTabs role="tablist">
            <SideTab role="tab">Library</SideTab>
            <SideTab role="tab" aria-selected $on>Favourites</SideTab>
          </SideTabs>
          <SideFrame>
            <SidePanel>
              <SideTools>
                <PlusTile aria-label="Add"><Plus s={14} /></PlusTile>
                <button aria-label="Remove"><RedX /></button>
              </SideTools>
              <ListBox>
                <Rows>
                  {books.map(([t, on], i) => (
                    <Row key={t} $on={i === 18}><Check type="checkbox" defaultChecked={!!on} /><span>{t}</span></Row>
                  ))}
                </Rows>
                <VBar $before={26} $thumb={145} $after={531}>
                  <Chev d="u" />
                  <Thumb />
                  <Chev d="d" />
                </VBar>
                <HBar><Chev d="l" /><Thumb /><Chev d="r" /></HBar>
              </ListBox>
              <SideButtons>
                <PushBtn disabled>Update</PushBtn>
                <PushBtn>Help</PushBtn>
              </SideButtons>
            </SidePanel>
            <VTabs role="tablist">
              <VTab $size={164}>Bibles</VTab>
              <VTab $size={228} $on>Commentaries</VTab>
              <VTab $size={218}>Books/Topics</VTab>
              <VTab $size={230}>Greek Lexicons</VTab>
            </VTabs>
            <VTabs role="tablist">
              <VTab $size={237}>Hebrew Lexicons</VTab>
              <VTab $size={212}>Parallel Bibles</VTab>
              <VTab $size={195}>Dictionaries</VTab>
              <VTab $size={196}>Devotionals</VTab>
            </VTabs>
          </SideFrame>
        </Side>
        <Desk>
          <Passage size={23} lead={32} indent={19} count={5} />
          <Passage size={21} lead={30} indent={17} count={6} />
          <Passage size={21} lead={30} indent={17} count={6} />
          <Diary />
        </Desk>
      </Workspace>
      <Status>
        <span />
        <span>(STV* / Darby_Synopse | Spurgeon_MorningEvening | GrkEng | HebEng)    [Jelle]</span>
        <span>OnlineBible.Net</span>
      </Status>
      <TaskBar>
        <TaskBtn $w={72} aria-label="Start"><Start /></TaskBtn>
        <TaskBtn $w={72} aria-label="Search"><Search /></TaskBtn>
        <TaskBtn $w={72} aria-label="Task view"><TaskView /></TaskBtn>
        <TaskApp $w={210} $left={11}><Folder /> Downloads</TaskApp>
        <TaskBtn $w={74} aria-label="Edge"><Edge /></TaskBtn>
        <TaskBtn $w={74} aria-label="Thunderbird"><Bird /></TaskBtn>
        <TaskBtn $w={74} aria-label="Word"><Word /></TaskBtn>
        <TaskApp $w={210} $left={7}><Chrome /> Helpdesk : Stichti...</TaskApp>
        <TaskBtn aria-label="Paint 3D"><Drop /></TaskBtn>
        <TaskBtn aria-label="Editor"><KIcon /></TaskBtn>
        <TaskBtn aria-label="Sticky notes"><Sticky /></TaskBtn>
        <TaskBtn aria-label="Log"><Notebook /></TaskBtn>
        <TaskBtn aria-hidden />
        <TaskBtn aria-label="Password safe"><Lock /></TaskBtn>
        <TaskBtn aria-label="PDF"><Pdf /></TaskBtn>
        <TaskApp $w={221} $left={1} $on><AppIcon s={36} h={36} /> Online Bible Editi...</TaskApp>
        <Tray>
          <Malware />
          <Net />
          <Speaker />
          <Clock>11:31<br />28-1-2025</Clock>
          <Notify />
        </Tray>
        <ShowDesktop aria-label="Show desktop" />
      </TaskBar>
    </Shell>
  );
}
